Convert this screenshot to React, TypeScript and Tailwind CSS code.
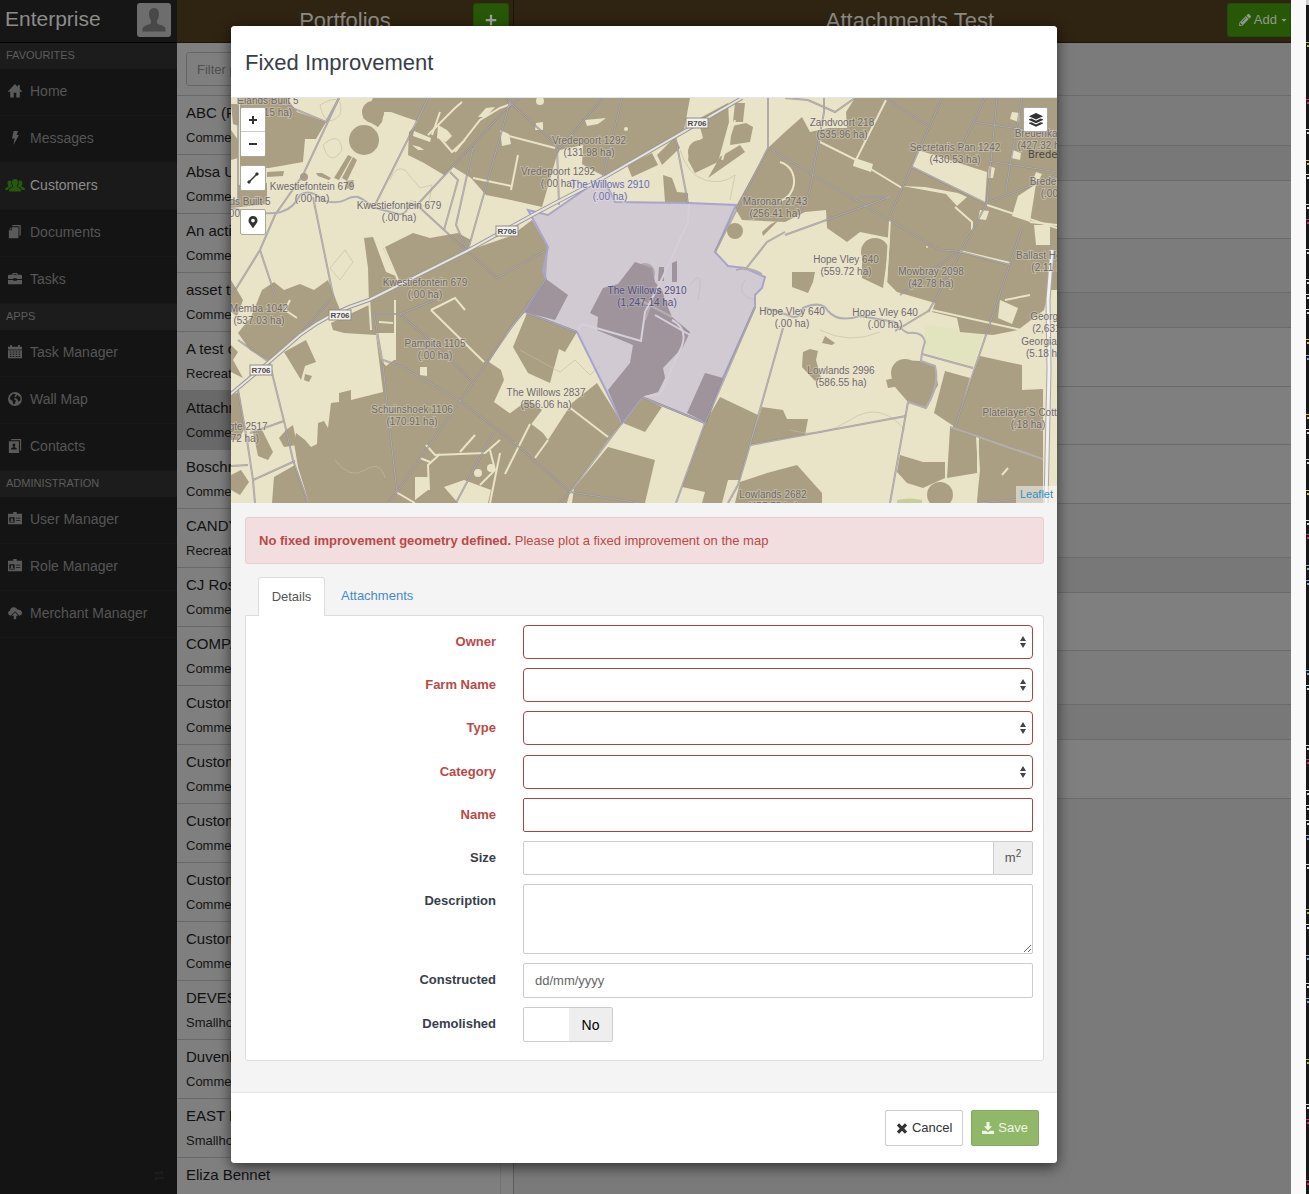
import React from "react";
import { FaCaretDown, FaPencilAlt, FaMapMarkerAlt } from "react-icons/fa";

/* ---------- icons ---------- */

const iconShapes: Record<string, React.ReactNode> = {
  home: <path d="M8 0 0 8.200l1 1.300L2.500 8.300V15.500h4V10h3v5.500h4V8.300L15 9.500l1-1.300-2.500-2.500V1.200h-2.300v2.200z" />,
  flash: <path d="M6.500 0h5L9.800 4.500H12.500L6.200 16l1.300-7.500H4.500z" />,
  documents: (
    <>
      <path d="M5 0h9.500v12H13V1.500H5z" />
      <path d="M4.500 2.500H12V15H1V6h3.500z" />
      <path d="M3.700 2.700V5H1.300z" />
    </>
  ),
  briefcase: (
    <>
      <path d="M5 3V2q0-1 1-1h4q1 0 1 1v1h3.500q1.500 0 1.500 1.500V8H10V7H6v1H0V4.500Q0 3 1.500 3zm1.300 0h3.400V2.200H6.300z" />
      <path d="M0 9h6v1h4V9h6v5H0z" />
    </>
  ),
  calendar: (
    <path
      fillRule="evenodd"
      d="M0 2h2.500V0h2v2h7V0h2v2H16v3H0zM0 6h16v9H0zM2 7.500v1.200h2V7.500zm3.300 0v1.200h2V7.500zm3.400 0v1.200h2V7.500zm3.300 0v1.200h2V7.500zM2 10v1.200h2V10zm3.300 0v1.200h2V10zm3.400 0v1.200h2V10zM12 10v1.200h2V10zM2 12.500v1.200h2v-1.200zm3.300 0v1.200h2v-1.200zm3.400 0v1.200h2v-1.200zm3.300 0v1.200h2v-1.200z"
    />
  ),
  globe: (
    <path
      fillRule="evenodd"
      d="M8 0a8 8 0 1 0 0 16A8 8 0 0 0 8 0zM3 4.500 6 2l3 .5L7.500 5 9 6.500 6.500 8 9 9.500 8 13l-2 1-1-4-3-2zM10.500 3l3.500 3 .4 3-2.400 2-1.500-3-2-1z"
    />
  ),
  contacts: (
    <path
      fillRule="evenodd"
      d="M4 0h11v13h-1.300V1.500H3zM1 2.500h11.500V16H1zM6.800 5a1.800 1.800 0 0 0-1 3.200l.2 1.300-2.500 1V12H10v-1.500l-2.500-1 .2-1.300A1.800 1.800 0 0 0 6.800 5z"
    />
  ),
  badge: (
    <path
      fillRule="evenodd"
      d="M6 0h4v2h6v12H0V2h6zM1.500 6v6h6V6zM9 6.500v1h5v-1zm0 2.500v1h5V9zM4.500 7a1.300 1.300 0 0 1 .8 2.300L7 11H2l1.700-1.700A1.300 1.300 0 0 1 4.500 7z"
    />
  ),
  cloud: (
    <>
      <path d="M3 11Q0 10.500 0 8q0-2 2.200-2.600Q3 1.500 6.700 1.500q2.800 0 4 2.400Q16 4 16 7.800q0 3-3 3.200L8 6z" />
      <path d="m8 7.200 3.800 4H9.400V15H6.600v-3.800H4.200z" />
    </>
  ),
  download: <path d="M6 0h4v5.500h3.500L8 11.200 2.500 5.500H6zM0 11.500h5.500L8 13.500l2.500-2H16V16H0z" />,
  cross: <path d="M3.800.5 8 4.700 12.200.5l3.300 3.300L11.300 8l4.200 4.200-3.300 3.300L8 11.300l-4.200 4.200-3.300-3.300L4.700 8 .5 3.800z" />,
  plus: <path d="M6.500 1h3v5.500H15v3H9.500V15h-3V9.500H1v-3h5.500z" />,
};

function Icon({ name, className = "" }: { name: string; className?: string }) {
  return (
    <svg viewBox="0 0 16 16" fill="currentColor" aria-hidden="true" className={className}>
      {iconShapes[name]}
    </svg>
  );
}

function UsersIcon() {
  return (
    <svg viewBox="0 0 20 13" fill="currentColor" aria-hidden="true" className="h-[13px] w-5">
      <path d="M10 0q3 0 3 3.200Q13 5.500 11.700 7q.1 1.200 3 2.200 1.300.6 1.300 3.300H4q0-2.700 1.300-3.300 2.900-1 3-2.200Q7 5.500 7 3.200 7 0 10 0z" />
      <path d="M5 1.500q1 0 1.500.6-.8 3 1 5.300-.3.500-2.400 1.200Q3.500 9.200 3.200 11H0q0-2 1.200-2.500Q3.500 7.800 3.700 7 2.500 6 2.500 4.200q0-2.700 2.500-2.700zM15 1.500q-1 0-1.500.6.800 3-1 5.300.3.500 2.400 1.200 1.600.6 1.900 2.400H20q0-2-1.200-2.500-2.300-.7-2.500-1.500 1.200-1 1.200-2.800 0-2.700-2.500-2.700z" />
    </svg>
  );
}

/* ---------- sidebar ---------- */

const navGroups = [
  {
    title: "FAVOURITES",
    items: [
      { label: "Home", icon: "home" },
      { label: "Messages", icon: "flash" },
      { label: "Customers", icon: "users", active: true },
      { label: "Documents", icon: "documents" },
      { label: "Tasks", icon: "briefcase" },
    ],
  },
  {
    title: "APPS",
    items: [
      { label: "Task Manager", icon: "calendar" },
      { label: "Wall Map", icon: "globe" },
      { label: "Contacts", icon: "contacts" },
    ],
  },
  {
    title: "ADMINISTRATION",
    items: [
      { label: "User Manager", icon: "badge" },
      { label: "Role Manager", icon: "badge" },
      { label: "Merchant Manager", icon: "cloud" },
    ],
  },
];

function Sidebar() {
  return (
    <aside className="flex w-[177px] shrink-0 flex-col bg-[#141414]">
      <div className="flex h-[43px] items-start justify-between border-b border-black bg-[#161616] pl-[5px] pr-1.5">
        <span className="pt-1 text-[21px] leading-[30px] text-[#8c8c8c]">Enterprise</span>
        <span className="mt-[3px] flex h-[34px] w-[34px] items-end justify-center rounded-[3px] bg-[#6d6d6d]">
          <svg viewBox="0 0 34 34" className="h-[34px] w-[34px]" fill="#484848" aria-hidden="true">
            <path d="M17 5q5 0 5 6 0 4-2 6.500v2.300q0 1 2 1.700 6.500 1.500 6.500 4.500v2.500h-23V26q0-3 6.500-4.500 2-.7 2-1.700v-2.300Q12 15 12 11q0-6 5-6z" />
          </svg>
        </span>
      </div>
      <nav>
        {navGroups.map((g) => (
          <section key={g.title}>
            <h2 className="h-[26px] bg-[#1c1c1c] pl-1.5 text-[11px] leading-[25px] text-[#5c5c5c]">{g.title}</h2>
            <ul>
              {g.items.map((item) => {
                const active = "active" in item && item.active;
                return (
                  <li key={item.label}>
                    <a
                      href="#"
                      className={
                        active
                          ? "flex h-[47px] items-center border-b border-[#181818] bg-[#1a1a1a] pb-0.5 text-sm text-[#8c8c8c]"
                          : "flex h-[47px] items-center border-b border-[#181818] pb-0.5 text-sm text-[#565656]"
                      }
                    >
                      <span className="flex w-[30px] justify-center">
                        {item.icon === "users" ? (
                          <span className="text-[#27590a]">
                            <UsersIcon />
                          </span>
                        ) : (
                          <Icon name={item.icon} className="h-3.5 w-3.5 text-[#5a5a5a]" />
                        )}
                      </span>
                      {item.label}
                    </a>
                  </li>
                );
              })}
            </ul>
          </section>
        ))}
      </nav>
      <div className="mt-auto flex justify-end px-3 py-3">
        <svg viewBox="0 0 12 12" className="h-3 w-3" stroke="#20242a" strokeWidth="1" fill="none" aria-hidden="true">
          <path d="M1 3h9l-2-2M11 8H2l2 2" />
        </svg>
      </div>
    </aside>
  );
}

/* ---------- portfolio list ---------- */

const portfolios = [
  ["ABC (Pty) Ltd", "Commercial"],
  ["Absa Upington", "Commercial"],
  ["An active farm", "Commercial"],
  ["asset test", "Commercial"],
  ["A test customer", "Recreational"],
  ["Attachments Test", "Commercial"],
  ["Boschrand", "Commercial"],
  ["CANDY Farms", "Recreational"],
  ["CJ Rossouw", "Commercial"],
  ["COMPANY Test", "Commercial"],
  ["Customer One", "Commercial"],
  ["Customer Two", "Commercial"],
  ["Customer Three", "Commercial"],
  ["Customer Four", "Commercial"],
  ["Customer Five", "Commercial"],
  ["DEVES Trust", "Smallholding"],
  ["Duvenhage", "Commercial"],
  ["EAST Farms", "Smallholding"],
  ["Eliza Bennet", ""],
];

function Portfolios() {
  return (
    <section className="flex w-[337px] shrink-0 flex-col bg-[#7f7f7f]">
      <header className="flex h-[43px] shrink-0 items-start justify-center border-b border-r border-[#1c1509] bg-[#2f2311]">
        <h1 className="flex-1 pl-10 pt-1.5 text-center text-[22px] leading-[30px] text-[#8d8a85]">Portfolios</h1>
        <button
          type="button"
          aria-label="Add portfolio"
          className="mr-1 mt-[3px] flex h-[34px] w-9 items-center justify-center rounded-[3px] border border-[#204d05] bg-[#285708] text-[#a0a0a0]"
        >
          <Icon name="plus" className="h-3 w-3" />
        </button>
      </header>
      <div className="flex-1 border-r border-[#5e5e5e]">
        <div className="h-[52px] px-[9px] pt-[9px]">
          <input
            aria-label="Filter portfolios"
            placeholder="Filter portfolios"
            className="h-[34px] w-full rounded-[3px] border border-[#666] bg-transparent px-2.5 text-[13px] placeholder:text-[#505050]"
          />
        </div>
        <ul className="mr-3 border-r border-[#747474]">
          {portfolios.map(([name, kind], i) => (
            <li
              key={i}
              className={
                i === 5
                  ? "h-[59px] border-t border-[#686868] bg-[#696969] px-[9px] pt-[7px]"
                  : "h-[59px] border-t border-[#696969] px-[9px] pt-[7px]"
              }
            >
              <p className="whitespace-nowrap text-[15px] leading-5 text-[#111]">{name}</p>
              <p className="whitespace-nowrap pt-[5px] text-[13px] leading-5 text-[#141414]">{kind}</p>
            </li>
          ))}
        </ul>
      </div>
    </section>
  );
}

/* ---------- detail column ---------- */

const bands = [
  "h-[53px] bg-[#7b7b7b]",
  "h-[50px] bg-[#7b7b7b]",
  "h-[35px] bg-[#787878]",
  "h-[58px] bg-[#7f7f7f]",
  "h-[54px] bg-[#7c7c7c]",
  "h-[35px] bg-[#787878]",
  "h-[59px] bg-[#7f7f7f]",
  "h-[58px] bg-[#7f7f7f]",
  "h-[59px] bg-[#7f7f7f]",
  "h-[54px] bg-[#7c7c7c]",
  "h-[35px] bg-[#787878]",
  "h-[58px] bg-[#7f7f7f]",
  "h-[54px] bg-[#7c7c7c]",
  "h-[35px] bg-[#787878]",
  "h-[59px] bg-[#7f7f7f]",
];

function Detail() {
  return (
    <main className="flex min-w-0 flex-1 flex-col bg-[#7a7a7a]">
      <header className="flex h-[43px] shrink-0 items-start border-b border-[#1c1509] bg-[#2f2311]">
        <h1 className="flex-1 pl-[79px] pt-1.5 text-center text-[22px] leading-[30px] text-[#8d8a85]">Attachments Test</h1>
        <button
          type="button"
          className="mt-[3px] flex h-[34px] w-16 items-center justify-end gap-[3px] rounded-l-[3px] border border-[#204d05] bg-[#285708] pr-0.5 text-[13px] text-[#8f9a8a]"
        >
          <FaPencilAlt className="h-3 w-3" />
          Add
          <FaCaretDown className="h-2 w-2" />
        </button>
      </header>
      {bands.map((band, i) => (
        <div key={i} className={`${band} shrink-0 border-b border-[#6b6b6b]`} />
      ))}
    </main>
  );
}

/* ---------- editor strip at the window edge ---------- */

const codeMarks: [number, string][] = [
  [44, "#a6c32b"], [101, "#e0246a"], [131, "#ddd"], [162, "#d6c94a"], [176, "#ddd"], [206, "#ddd"], [221, "#e0246a"],
  [251, "#ddd"], [281, "#ddd"], [296, "#ddd"], [311, "#ddd"], [341, "#d6c94a"], [357, "#8aa4d8"], [416, "#d6c94a"],
  [431, "#ddd"], [461, "#ddd"], [492, "#d6c94a"], [522, "#ddd"], [536, "#e0246a"], [567, "#8aa4d8"], [582, "#8aa4d8"],
  [672, "#8aa4d8"], [687, "#ddd"], [747, "#ddd"], [761, "#e0246a"], [792, "#ddd"], [807, "#ddd"], [822, "#ddd"],
  [837, "#8aa4d8"], [866, "#ddd"], [911, "#a6c32b"], [926, "#ddd"], [957, "#8aa4d8"], [985, "#ddd"], [1000, "#8aa4d8"],
  [1061, "#a6c32b"], [1106, "#ddd"], [1121, "#e0246a"], [1182, "#e0246a"],
];

function WindowEdge() {
  return (
    <div className="flex w-[18px] shrink-0 bg-[#f9f9f9]">
      <svg className="ml-auto h-[1194px] w-[3px] bg-[#191919]" viewBox="0 0 3 1194" aria-hidden="true">
        <rect width="3" height="5" fill="#ccc" />
        {codeMarks.map(([y, c]) => (
          <g key={y} fill={c}>
            <rect x="0" y={y - 2} width="3" height="1" />
            <rect x="1" y={y + 1} width="2" height="2" />
          </g>
        ))}
      </svg>
    </div>
  );
}

/* ---------- map ---------- */

const fields = [
  "240,98 287,98 297,112 326,122 316,139 305,139 303,162 269,168 240,168",
  "231,130 238,140 238,158 231,160",
  "267,172 284,171 283,176 267,177",
  "238,185 267,183 267,204 231,208 231,200 238,200",
  "231,104 239,104 239,126 233,124",
  "363,118 373,98 428,98 417,121 405,117 391,112 384,112 382,122 378,127",
  "348,155 352,157 339,180 334,178",
  "353,157 357,160 347,181 342,178",
  "346,181 354,180 352,188 345,189",
  "316,173 322,173 331,178 329,180 318,176",
  "428,98 690,98 684,130 604,176 582,165 583,145 560,150 557,155 542,207 511,200 486,195 471,178 453,167 444,175 424,163 408,155 409,132 416,125",
  "383,248 413,233 430,238 458,233 471,240 467,251 511,236 532,220 548,247 546,279 525,312 511,328 489,362 501,370 504,380 494,402 515,417 515,447 505,475 505,503 309,503 298,467 294,443 296,433 305,440 311,447 317,444 318,423 324,421 328,428 331,403 339,402 339,393 351,390 351,400 383,392 376,335 344,333 333,330 331,323 369,305 368,268 364,238 373,237 386,272 396,276",
  "238,333 251,317 262,290 274,282 284,290 300,284 314,290 328,280 336,300 341,312 303,331 269,361 250,350",
  "231,280 243,300 237,316 231,312",
  "284,352 306,340 316,362 305,366 301,380",
  "305,374 312,376 309,382 304,380",
  "253,432 262,430 273,452 268,460 258,456",
  "286,430 293,425 297,445 284,447 279,438",
  "272,503 274,477 295,465 309,503",
  "231,395 239,392 245,428 238,440 231,440",
  "231,475 241,470 249,482 240,495 231,490",
  "231,345 238,352 233,360 243,378 231,372",
  "627,165 652,153 658,165 632,177",
  "657,155 675,137 680,148 662,165",
  "700,127 700,118 728,103 729,122 718,162 695,173 688,160 690,146 703,138",
  "735,103 745,103 743,122 733,122",
  "732,126 746,123 753,127 750,142 730,145",
  "720,157 740,145 745,152 708,178",
  "663,175 672,178 677,192 688,193 688,202 665,202",
  "768,148 785,132 802,117 810,132 828,128 847,128 846,112 855,98 1057,98 1057,290 1049,290 1044,310 1018,330 993,335 960,332 957,318 932,312 935,303 897,292 887,282 890,238 860,232 847,242 827,228 826,210 805,212 785,222 742,220 735,208",
  "862,252 888,252 883,288 862,278",
  "792,272 815,272 813,282 808,293 792,287",
  "762,232 771,224 779,220 763,236",
  "546,279 568,295 555,320 525,312",
  "513,347 527,313 577,332 565,352 559,349 550,383 528,373",
  "515,445 530,423 543,433 548,440 572,403 597,383 622,423 608,440 570,492 567,503 505,503 505,475",
  "505,417 528,400 542,410 517,443 505,440",
  "608,447 655,460 645,503 572,503 574,488",
  "623,423 642,397 662,407 645,432",
  "720,397 758,415 740,480 728,480 722,503 702,503 705,492 682,487 705,423",
  "762,407 783,410 787,419 808,419 805,435 750,445",
  "740,482 767,473 797,465 822,493 822,503 735,503",
  "810,349 818,351 816,360 821,378 815,381 802,367 803,352",
  "822,343 825,336 835,343 832,345",
  "895,387 900,360 920,361 935,365 938,385 925,408 908,402",
  "886,380 894,378 900,386 888,388",
  "945,371 970,378 955,427 934,413",
  "980,356 1022,365 1022,390 1043,389 1043,458 953,427",
  "950,428 977,437 977,473 947,478",
  "979,438 1043,460 1043,503 977,503",
  "900,455 923,462 945,462 945,478 923,488 907,483 897,472",
  "705,373 723,378 707,423 687,413",
  "603,288 618,284 635,262 652,268 655,282 662,290 665,300 672,317 690,332 683,347 663,368 665,378 658,392 642,397 622,423 608,390 630,363 633,345 597,330 598,317 590,313",
  "672,263 677,261 677,282 672,282",
  "659,267 664,267 664,281 658,281",
];

const discs: [number, number, number][] = [
  [364, 140, 15], [373, 112, 11], [304, 177, 4], [735, 231, 8], [700, 152, 12],
  [875, 252, 14], [905, 373, 14], [940, 495, 13], [645, 273, 10],
];

const clearings = [
  "918,150 987,172 985,203 912,167",
  "1018,196 1036,184 1030,222 1012,216",
  "980,210 989,211 986,220 978,219",
  "376,333 394,333 394,360 386,366 381,360",
  "444,487 464,480 491,490 488,503 458,503",
  "415,477 428,477 428,490 415,500",
  "536,123 543,122 543,130 535,130",
  "585,120 606,118 598,124 587,126",
  "420,367 427,367 427,376 420,375",
  "855,158 873,164 871,172 853,166",
  "902,186 925,187 958,193 967,197 957,206 946,194",
  "414,131 431,138 430,142 413,136",
  "412,145 420,147 424,150 418,150",
  "1034,225 1050,225 1050,245 1036,245",
  "1012,112 1020,113 1019,122 1010,119",
  "1013,150 1021,153 1020,160 1011,158",
  "1036,172 1042,174 1038,182 1033,180",
  "989,166 995,168 993,178 988,178",
  "438,125 447,130 452,136 446,142 437,138",
  "486,108 495,107 486,117 478,117",
  "500,130 509,134 511,144 502,146",
  "560,175 582,164 602,177 566,198 558,200",
  "1000,300 1018,308 1012,324 998,318",
];

const tracks = [
  "886,100 856,160 820,142", "856,160 902,188", "890,220 886,285", "960,251 1010,263",
  "955,207 972,222 972,230", "987,205 1057,228", "428,135 455,108 462,102", "455,152 480,120 500,108 511,104",
  "440,112 432,135", "440,138 452,152 465,140", "473,178 511,186", "505,135 555,148", "518,155 511,190",
  "395,300 395,360", "369,298 371,330", "379,322 393,323", "383,245 398,280", "431,310 484,362", "431,310 455,298 465,310",
  "426,445 435,455 485,453 500,440", "429,490 428,465 440,454", "460,452 475,435", "490,450 495,470 480,485", "500,453 490,503",
  "396,492 415,503", "420,458 430,462", "569,407 608,437", "505,474 530,424", "535,458 548,440",
  "977,437 979,470 976,500", "1002,475 1008,468", "932,310 1035,333", "1030,222 1057,225", "1005,300 1030,295",
  "651,303 645,320", "672,317 640,300", "290,300 285,310 297,318", "735,120 722,160",
];

const boundaries = [
  "339,98 303,175 275,215 260,250 231,297", "339,98 326,122 285,105 265,98", "428,98 415,125 375,205", "313,197 334,300",
  "238,98 238,205", "260,250 275,295", "418,204 505,110 520,98", "450,172 458,180 444,230", "478,150 473,148 456,225 467,250", "511,98 495,155 468,250",
  "418,206 467,251 497,278 511,270 546,250", "505,98 560,148 603,98", "557,148 559,205", "622,98 603,177", "675,135 688,203",
  "768,98 768,148 715,252", "785,98 808,100 835,112 855,98", "824,98 824,112 810,190 800,212", "768,148 940,250 957,251 1010,265",
  "942,98 890,215", "985,98 960,150", "927,125 885,98", "785,235 890,197 858,197", "745,270 767,242 785,232",
  "997,98 987,203 935,300 928,312", "957,252 900,295", "1022,98 1010,165 1006,190", "974,122 1057,135", "987,203 1040,182 1057,175",
  "1022,228 955,427", "988,161 1057,172", "912,167 985,203",
  "374,314 400,314 435,300", "374,314 383,365 391,440 397,492", "400,314 435,345 472,381", "383,360 403,367 460,401 511,440 570,492 640,503",
  "511,328 460,401 397,492 388,503", "546,279 511,328", "493,433 456,503",
  "269,361 285,425 293,460 308,503", "269,362 238,340", "238,390 247,440 253,480 255,503", "250,433 284,421", "253,480 295,461", "231,466 248,465",
  "622,423 570,492 560,503", "705,423 676,503", "755,307 705,423", "783,328 750,445 738,485 728,503", "750,445 906,416",
  "908,402 890,503", "922,354 973,368", "930,310 895,331", "950,427 1043,459", "978,503 1043,497", "527,313 577,332", "505,335 525,310", "303,331 330,300",
  "642,397 705,423",
];

const streams =
  "M231 208Q268 216 281 212T300 195Q310 188 325 201 338 204 345 200T358 197Q365 200 372 207 390 212 398 214T410 203Q415 205 420 207M765 308Q780 312 790 316T803 308Q822 300 828 311 838 323 860 316L895 322Q901 330 908 333 923 331 925 342 922 350 921 361L935 366Q940 385 926 408L908 402M736 270Q748 266 762 274";

const road = "M742 98 605 177 538 212 467 251 369 300Q330 312 300 335L269 362 231 394";

const contours =
  "M320 105Q345 90 340 115 325 130 320 105M323 145Q340 130 342 150 330 168 323 145M390 180Q395 165 405 170L420 188 432 185 428 208 410 200M345 250L353 262 340 280 330 268zM680 150Q688 175 705 180T735 175L730 200M690 285Q705 265 698 300M745 280Q735 295 755 300M520 350L560 372 575 360 590 375 600 366M790 430Q820 440 850 420T905 430M335 460Q350 480 365 470T385 478M820 330Q850 345 880 332";

const property =
  "528,210 548,215 603,177 615,202 688,203 736,205 715,252 728,266 745,268 765,277 762,288 755,295 755,307 722,380 705,423 642,397 622,423 577,332 525,312 546,279 543,270 548,247";

const labels: [number, number, string, string?][] = [
  [268, 104, "Elands Built 5", "(1,1 15 ha)"],
  [240, 205, "Elands Built 5", "(.00 ha)"],
  [312, 190, "Kwestiefontein 679", "(.00 ha)"],
  [399, 209, "Kwestiefontein 679", "(.00 ha)"],
  [425, 286, "Kwestiefontein 679", "(.00 ha)"],
  [589, 144, "Vredepoort 1292", "(131.98 ha)"],
  [558, 175, "Vredepoort 1292", "(.00 ha)"],
  [842, 126, "Zandvoort 218", "(535.96 ha)"],
  [955, 151, "Secretaris Pan 1242", "(430.53 ha)"],
  [1043, 137, "Bredenkamp", "(427.32 ha)"],
  [1058, 185, "Bredenkamp", "(.00 ha)"],
  [775, 205, "Maronan 2743", "(256.41 ha)"],
  [846, 263, "Hope Vley 640", "(559.72 ha)"],
  [931, 275, "Mowbray 2098", "(42.78 ha)"],
  [1051, 259, "Ballast Hoek 12", "(2.11 ha)"],
  [792, 315, "Hope Vley 640", "(.00 ha)"],
  [885, 316, "Hope Vley 640", "(.00 ha)"],
  [1055, 320, "Georgia 81", "(2,631 ha)"],
  [1046, 345, "Georgia 81", "(5.18 ha)"],
  [841, 374, "Lowlands 2996", "(586.55 ha)"],
  [1028, 416, "Platelayer'S Cottage", "(.18 ha)"],
  [259, 312, "Memba 1042", "(537.03 ha)"],
  [435, 347, "Pampita 1105", "(.00 ha)"],
  [412, 413, "Schuinshoek 1106", "(170.91 ha)"],
  [546, 396, "The Willows 2837", "(556.06 ha)"],
  [239, 430, "Hoogte 2517", "(2.72 ha)"],
  [773, 498, "Lowlands 2682", "(457.75 ha)"],
];

const shields: [number, number][] = [
  [697, 123], [507, 231], [340, 315], [261, 370],
];

function MapDrawing() {
  return (
    <svg viewBox="231 98 826 405" preserveAspectRatio="xMidYMid slice" className="block h-full w-full" aria-label="Farm map" role="img">
      <rect x="231" y="98" width="826" height="405" fill="#e9e3c8" />
      <path d="M925 325 983 333 973 366 924 352z" fill="#e2e3bf" />
      <path d="M897 500q12-3 25 0v4h-25z" fill="#c5cf9c" />
      <g fill="#ab9f83">
        {fields.map((p) => (
          <polygon key={p} points={p} />
        ))}
        {discs.map(([x, y, r]) => (
          <circle key={`${x}-${y}`} cx={x} cy={y} r={r} />
        ))}
      </g>
      <g fill="#e9e3c8">
        {clearings.map((p) => (
          <polygon key={p} points={p} />
        ))}
        <circle cx="540" cy="101" r="4" />
        <circle cx="626" cy="129" r="2" />
        <circle cx="478" cy="473" r="4" />
        <circle cx="491" cy="468" r="4" />
        <circle cx="927" cy="247" r="1" />
      </g>
      <g fill="none" stroke="#e9e3c8" strokeWidth="2">
        {tracks.map((p) => (
          <polyline key={p} points={p} />
        ))}
        <path d="M780 162q15 5 14 22-2 13-14 17" />
      </g>
      <path d={contours} fill="none" stroke="#c4bc9f" strokeOpacity="0.6" />
      <polygon points={property} fill="#b9b1dc" fillOpacity="0.5" stroke="#a9a4cb" strokeWidth="2" />
      <g fill="#73666f" fillOpacity="0.3">
        <polygon points="705,373 723,378 707,423 687,413" />
        <polygon points="603,288 618,284 635,262 652,268 655,282 662,290 665,300 672,317 690,332 683,347 663,368 665,378 658,392 642,397 622,423 608,390 630,363 633,345 597,330 598,317 590,313" />
        <polygon points="546,279 568,295 555,320 525,312" />
        <polygon points="672,263 677,261 677,282 672,282" />
        <polygon points="659,267 664,267 664,281 658,281" />
      </g>
      <g fill="none" stroke="#d5cfdb" strokeWidth="2">
        <path d="M689 204 688 222 660 283 645 312 641 341 582 324 577 330M655 315 690 335M672 320q16 8 10 26l-22 48-16 3" />
      </g>
      <g fill="none" stroke="#8d8887" strokeOpacity="0.7" strokeWidth="2">
        {boundaries.map((p) => (
          <polyline key={p} points={p} />
        ))}
      </g>
      <g fill="none" stroke="#c9c5cf" strokeOpacity="0.5" strokeWidth="1">
        {boundaries.map((p) => (
          <polyline key={p} points={p} />
        ))}
      </g>
      <path d={streams} fill="none" stroke="#b0adb3" strokeWidth="2" />
      <path d={road} fill="none" stroke="#9c9894" strokeWidth="4" />
      <path d={road} fill="none" stroke="#e6e3e0" strokeWidth="2" />
      <path d="M1052 250 1048 300 1049 370 1046 503" fill="none" stroke="#a9a6a6" strokeWidth="5" />
      <path d="M1052 250 1048 300 1049 370 1046 503" fill="none" stroke="#f2f0ee" strokeWidth="3" />
      {shields.map(([x, y]) => (
        <g key={`${x}-${y}`}>
          <rect x={x - 11} y={y - 5} width="22" height="10" fill="#f4f2ee" stroke="#8f8b86" />
          <text x={x} y={y + 3} textAnchor="middle" fontSize="8" fontWeight="700" fill="#4b4b4b">
            R706
          </text>
        </g>
      ))}
      <g fontSize="10" textAnchor="middle" fill="#706a68" stroke="#ece7dc" strokeOpacity="0.35" strokeWidth="2" paintOrder="stroke">
        {labels.map(([x, y, a, b], i) => (
          <text key={i} x={x} y={y}>
            {a}
            <tspan x={x} dy="12">
              {b}
            </tspan>
          </text>
        ))}
      </g>
      <g fontSize="10" textAnchor="middle" fill="#6f6c98" stroke="#e2dfee" strokeOpacity="0.5" strokeWidth="2" paintOrder="stroke">
        <text x="610" y="188">
          The Willows 2910
          <tspan x="610" dy="12">(.00 ha)</tspan>
        </text>
        <text x="647" y="294" fill="#55507c" strokeOpacity="0.2">
          The Willows 2910
          <tspan x="647" dy="12">(1,247.14 ha)</tspan>
        </text>
      </g>
      <text x="1028" y="158" fontSize="10" fill="#4a4643" fontFamily="DejaVu Sans">
        Brede
      </text>
    </svg>
  );
}

const mapButton =
  "flex h-[26px] w-[26px] items-center justify-center rounded-[2px] border border-[#aaa69a] bg-white text-[#333]";

function FarmMap() {
  return (
    <div className="relative h-[405px] overflow-hidden">
      <MapDrawing />
      <div className="absolute left-[9px] top-[9px] flex flex-col">
        <div className="flex flex-col overflow-hidden rounded-[2px] border border-[#aaa69a]">
          <button type="button" aria-label="Zoom in" className="flex h-6 w-6 items-center justify-center border-b border-[#ccc] bg-white text-[#333]">
            <svg viewBox="0 0 8 8" className="h-2 w-2" stroke="currentColor" strokeWidth="2" aria-hidden="true">
              <path d="M0 4h8M4 0v8" />
            </svg>
          </button>
          <button type="button" aria-label="Zoom out" className="flex h-6 w-6 items-center justify-center bg-white text-[#333]">
            <svg viewBox="0 0 8 8" className="h-2 w-2" stroke="currentColor" strokeWidth="2" aria-hidden="true">
              <path d="M0 4h8" />
            </svg>
          </button>
        </div>
        <button type="button" aria-label="Draw line" className={`${mapButton} mt-2`}>
          <svg viewBox="0 0 12 12" className="h-3 w-3" fill="currentColor" stroke="currentColor" aria-hidden="true">
            <path d="M2 10 10 2" strokeWidth="1.5" />
            <path d="M1 9h2v2H1zM9 1h2v2H9z" />
          </svg>
        </button>
        <button type="button" aria-label="Drop marker" className={`${mapButton} mt-[18px]`}>
          <FaMapMarkerAlt className="h-3 w-3" />
        </button>
      </div>
      <button type="button" aria-label="Layers" className="absolute right-[9px] top-[9px] flex h-[25px] w-[25px] items-center justify-center rounded-[2px] border border-[#aaa69a] bg-white text-[#333]">
        <svg viewBox="0 0 16 14" className="h-3.5 w-4" fill="currentColor" aria-hidden="true">
          <path d="m8 0 7 3.300L8 6.600 1 3.300z" />
          <path d="M1 6.200 3.500 5.600 8 7.800l4.500-2.200 2.500.6v.8L8 10.200 1 7z" />
          <path d="M1 9.800 3.500 9.200 8 11.400l4.500-2.200 2.500.6v.8L8 13.800 1 10.600z" />
        </svg>
      </button>
      <a href="#" className="absolute bottom-0 right-0 bg-white/50 px-1 text-[11px] leading-[17px] text-[#2f8fc4]">
        Leaflet
      </a>
    </div>
  );
}

/* ---------- form ---------- */

const rowClass = "grid grid-cols-[minmax(0,250px)_minmax(0,1fr)] gap-x-[27px]";
const labelClass = "pt-[7px] text-right text-[13px] font-bold leading-5 text-[#373e4a]";
const errorLabelClass = "pt-[7px] text-right text-[13px] font-bold leading-5 text-[#b94a48]";
const fieldClass = "block w-full min-w-0 border border-[#ccc] bg-white px-[11px] text-[13px] text-[#555]";

function SelectRow({ label, id }: { label: string; id: string }) {
  return (
    <div className={rowClass}>
      <label htmlFor={id} className={errorLabelClass}>
        {label}
      </label>
      <div className="relative">
        <select id={id} className="block h-[34px] w-full appearance-none rounded border border-[#a94442] bg-white px-3 text-[13px]">
          <option value="" />
        </select>
        <svg viewBox="0 0 6 12" className="pointer-events-none absolute right-[7px] top-[11px] h-3 w-1.5" fill="#444" aria-hidden="true">
          <path d="M3 0 6 5H0zM3 12 0 7h6z" />
        </svg>
      </div>
    </div>
  );
}

function ImprovementForm() {
  return (
    <form
      id="improvement"
      onSubmit={(e) => e.preventDefault()}
      className="flex flex-col gap-[9px] rounded-[3px] rounded-tl-none border border-[#ddd] bg-white pb-[18px] pr-2.5 pt-[9px]"
    >
      <SelectRow label="Owner" id="owner" />
      <SelectRow label="Farm Name" id="farm" />
      <SelectRow label="Type" id="type" />
      <div className="pt-px">
        <SelectRow label="Category" id="category" />
      </div>
      <div className={rowClass}>
        <label htmlFor="name" className={errorLabelClass}>
          Name
        </label>
        <input id="name" type="text" className="block h-[34px] w-full rounded-[2px] border border-[#a94442] bg-white px-[11px] text-[13px]" />
      </div>
      <div className={rowClass}>
        <label htmlFor="size" className={labelClass}>
          Size
        </label>
        <div className="flex h-[34px]">
          <input id="size" type="text" className={`${fieldClass} flex-1 rounded-l-[2px]`} />
          <span className="flex w-[39px] shrink-0 items-center justify-center rounded-r-[2px] border border-l-0 border-[#ccc] bg-[#eee] text-[13px] text-[#555]">
            <span>
              m<sup className="text-[10px]">2</sup>
            </span>
          </span>
        </div>
      </div>
      <div className={rowClass}>
        <label htmlFor="description" className={labelClass}>
          Description
        </label>
        <textarea id="description" className="block h-[70px] w-full rounded-[2px] border border-[#ccc] bg-white px-[11px] py-1.5 text-[13px]" />
      </div>
      <div className={rowClass}>
        <label htmlFor="constructed" className={labelClass}>
          Constructed
        </label>
        <input id="constructed" type="text" placeholder="dd/mm/yyyy" className={`${fieldClass} h-[35px] rounded-[2px] placeholder:text-[#666]`} />
      </div>
      <div className={rowClass}>
        <span id="demolished" className={labelClass}>
          Demolished
        </span>
        <button
          type="button"
          role="switch"
          aria-checked="false"
          aria-labelledby="demolished"
          className="flex h-[35px] w-[90px] overflow-hidden rounded-[2px] border border-[#ccc] bg-white text-sm leading-[34px] text-black"
        >
          <span className="ml-auto h-full w-[43px] bg-[#eee] text-center">No</span>
        </button>
      </div>
    </form>
  );
}

function ImprovementDialog() {
  return (
    <div
      role="dialog"
      aria-labelledby="dialog-title"
      className="flex w-full max-w-[826px] flex-col overflow-hidden rounded bg-[#f4f4f4] shadow-[0_4px_14px_rgba(0,0,0,0.6)]"
    >
      <header className="flex h-[72px] items-center border-b border-[#e5e5e5] bg-white px-3.5">
        <h2 id="dialog-title" className="pt-0.5 text-[22px] leading-8 text-[#373e4a]">
          Fixed Improvement
        </h2>
      </header>
      <FarmMap />
      <div className="pb-[31px] pl-[14px] pr-[13px] pt-3.5">
        <p role="alert" className="rounded-[3px] border border-[#ebccd1] bg-[#f2dede] px-[13px] pb-3 pt-[13px] text-[13px] leading-5 text-[#b94a48]">
          <strong>No fixed improvement geometry defined.</strong> Please plot a fixed improvement on the map
        </p>
        <div role="tablist" className="relative mt-[13px] flex pl-[13px] text-[13px]">
          <button
            type="button"
            role="tab"
            aria-selected="true"
            className="-mb-px h-[39px] w-[67px] rounded-t-[3px] border border-b-0 border-[#ddd] bg-white text-[#555]"
          >
            Details
          </button>
          <button type="button" role="tab" aria-selected="false" className="h-[38px] px-4 text-[#428bca]">
            Attachments
          </button>
        </div>
        <ImprovementForm />
      </div>
      <footer className="flex h-[71px] items-center justify-end gap-2 border-t border-[#e5e5e5] bg-white px-[18px]">
        <button type="button" className="flex h-9 items-center gap-1 rounded-[2px] border border-[#ccc] bg-white px-2.5 text-[13px] text-[#333]">
          <Icon name="cross" className="h-[11px] w-3" />
          Cancel
        </button>
        <button type="button" className="flex h-9 items-center gap-1 rounded-[2px] border border-[#84a95c] bg-[#91b868] px-2.5 text-[13px] text-[#eef5e6]">
          <Icon name="download" className="h-3 w-3" />
          Save
        </button>
      </footer>
    </div>
  );
}

export default function App() {
  return (
    <div className="relative h-screen overflow-hidden font-['Liberation_Sans',Arial,sans-serif]">
      <div className="flex h-full">
        <Sidebar />
        <Portfolios />
        <Detail />
        <WindowEdge />
      </div>
      <div className="absolute inset-y-0 left-0 right-[18px] flex items-start justify-center pr-[3px] pt-[26px]">
        <ImprovementDialog />
      </div>
    </div>
  );
}
